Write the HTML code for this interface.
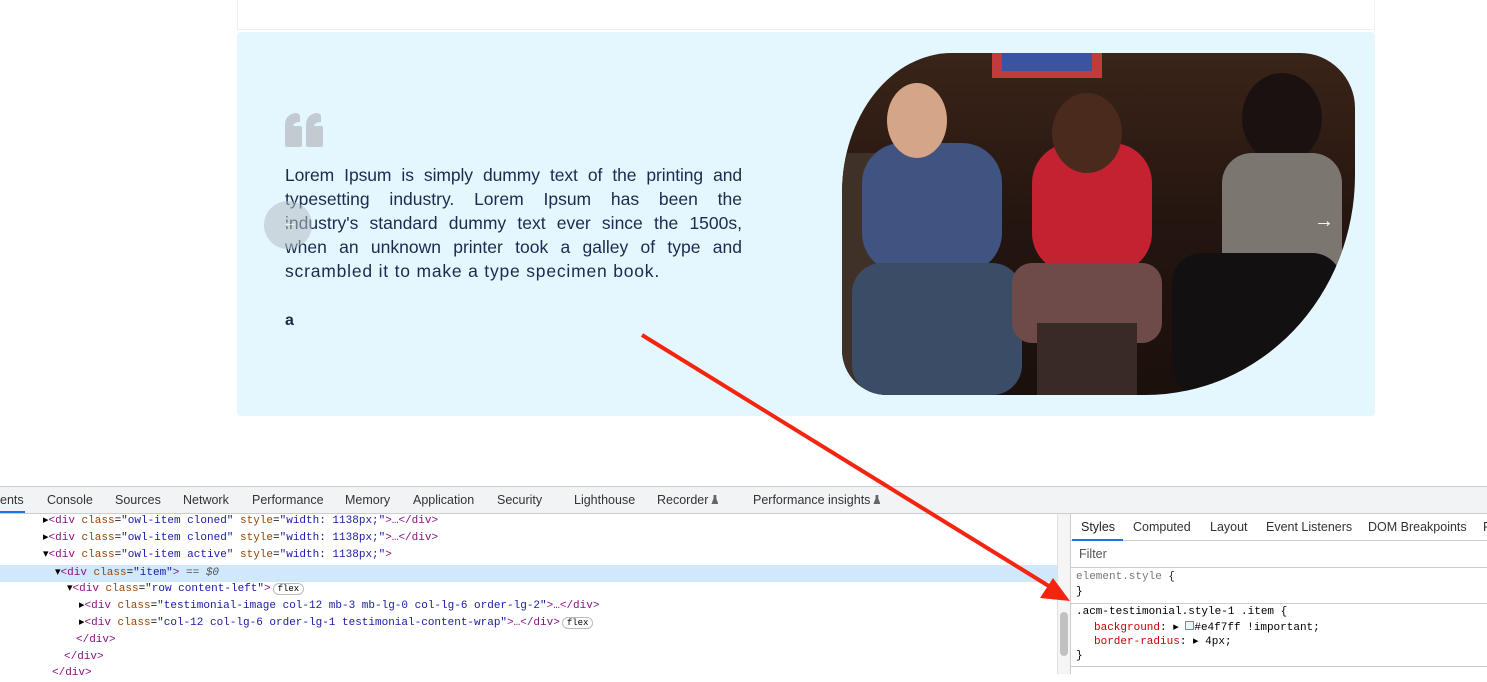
<!DOCTYPE html>
<html><head><style>
*{margin:0;padding:0;box-sizing:border-box}
body{width:1487px;height:674px;background:#fff;position:relative;overflow:hidden;font-family:"Liberation Sans",sans-serif}
.abs{position:absolute}
.mono{font-family:"Liberation Mono",monospace;font-size:11px;white-space:nowrap}
.tag{color:#881280}.an{color:#994500}.av{color:#1a1aa6}
.tab{position:absolute;top:493px;font-size:12.5px;color:#333}
.line{position:absolute;height:17px;line-height:17px}
.fl{display:inline-block;width:7px;height:9px;background:#666;clip-path:polygon(30% 0,70% 0,70% 40%,100% 100%,0 100%,30% 40%);margin-left:3px}
</style></head><body>
<div class="abs" style="left:237px;top:0;width:1138px;height:30px;border:1px solid #eee;border-top:none"></div>
<div class="abs" style="left:237px;top:32px;width:1138px;height:384px;background:#e4f7ff;border-radius:4px"></div>
<svg class="abs" style="left:285px;top:113px" width="38" height="34" viewBox="0 0 38 34"><path d="M0 12 Q0 2 10 0 Q15 0 15 4 L15 9 Q9 9 8 13 L15 13 Q17 13 17 15 L17 32 Q17 34 15 34 L2 34 Q0 34 0 32Z M21 12 Q21 2 31 0 Q36 0 36 4 L36 9 Q30 9 29 13 L36 13 Q38 13 38 15 L38 32 Q38 34 36 34 L23 34 Q21 34 21 32Z" fill="#c2cbd1"/></svg>
<div class="abs" style="left:285px;top:163px;width:457px;font-size:17.5px;line-height:24px;color:#1d2a4f">
<div style="text-align:justify;text-align-last:justify;letter-spacing:-0.1px">Lorem Ipsum is simply dummy text of the printing and</div>
<div style="text-align:justify;text-align-last:justify">typesetting industry. Lorem Ipsum has been the</div>
<div style="text-align:justify;text-align-last:justify">industry's standard dummy text ever since the 1500s,</div>
<div style="text-align:justify;text-align-last:justify">when an unknown printer took a galley of type and</div>
<div style="letter-spacing:0.8px">scrambled it to make a type specimen book.</div>
</div>
<div class="abs" style="left:285px;top:312px;font-size:16px;font-weight:bold;color:#1d2a4f">a</div>
<div class="abs" style="left:264px;top:201px;width:48px;height:48px;border-radius:50%;background:rgba(180,190,195,.55)"></div>
<div class="abs" style="left:282px;top:214px;color:#fff;font-size:16px">←</div>
<div class="abs" style="left:842px;top:53px;width:513px;height:342px;border-radius:110px 55px 210px 45px / 140px 55px 220px 45px;overflow:hidden;background:linear-gradient(180deg,#3a2418 0%,#241510 50%,#1a100c 100%)">
<div class="abs" style="left:150px;top:0;width:110px;height:25px;background:#c23a3a"></div>
<div class="abs" style="left:160px;top:0;width:90px;height:18px;background:#3954a0"></div>
<div class="abs" style="left:0;top:100px;width:130px;height:242px;background:#403128"></div>
<div class="abs" style="left:20px;top:90px;width:140px;height:130px;border-radius:40px;background:#3f5480"></div>
<div class="abs" style="left:45px;top:30px;width:60px;height:75px;border-radius:50%;background:#d4a586"></div>
<div class="abs" style="left:10px;top:210px;width:170px;height:132px;border-radius:30px;background:#3b4c66"></div>
<div class="abs" style="left:190px;top:90px;width:120px;height:130px;border-radius:40px;background:#c42230"></div>
<div class="abs" style="left:210px;top:40px;width:70px;height:80px;border-radius:50%;background:#4a2a1c"></div>
<div class="abs" style="left:170px;top:210px;width:150px;height:80px;border-radius:20px;background:#6e4a48"></div>
<div class="abs" style="left:195px;top:270px;width:100px;height:72px;background:#3a2a26"></div>
<div class="abs" style="left:400px;top:20px;width:80px;height:90px;border-radius:50%;background:#1a1210"></div>
<div class="abs" style="left:380px;top:100px;width:120px;height:140px;border-radius:30px;background:#7c7670"></div>
<div class="abs" style="left:330px;top:200px;width:170px;height:142px;border-radius:30px;background:#121010"></div>
</div>
<div class="abs" style="left:1314px;top:210px;color:#fff;font-size:20px;font-weight:bold">→</div>
<div class="abs" style="left:0;top:486px;width:1487px;height:188px;background:#fff;border-top:1px solid #cbcdd1"></div>
<div class="abs" style="left:0;top:487px;width:1487px;height:27px;background:#f1f3f4;border-bottom:1px solid #cbcdd1"></div>
<div class="tab" style="left:0">ents</div><div class="abs" style="left:0;top:511px;width:25px;height:2px;background:#1a73e8"></div>
<div class="tab" style="left:47px">Console</div><div class="tab" style="left:115px">Sources</div><div class="tab" style="left:183px">Network</div><div class="tab" style="left:252px">Performance</div><div class="tab" style="left:345px">Memory</div><div class="tab" style="left:413px">Application</div><div class="tab" style="left:497px">Security</div><div class="tab" style="left:574px">Lighthouse</div><div class="tab" style="left:657px">Recorder<span class="fl"></span></div><div class="tab" style="left:753px">Performance insights<span class="fl"></span></div>
<div class="abs" style="left:0;top:565px;width:1057px;height:17px;background:#cfe8fc"></div>
<div class="mono">
<div class="line" style="left:43px;top:513px">▸<span class="tag">&lt;div</span> <span class="an">class</span>=<span class="av">"owl-item cloned"</span> <span class="an">style</span>=<span class="av">"width: 1138px;"</span><span class="tag">&gt;…&lt;/div&gt;</span></div>
<div class="line" style="left:43px;top:530px">▸<span class="tag">&lt;div</span> <span class="an">class</span>=<span class="av">"owl-item cloned"</span> <span class="an">style</span>=<span class="av">"width: 1138px;"</span><span class="tag">&gt;…&lt;/div&gt;</span></div>
<div class="line" style="left:43px;top:547px">▾<span class="tag">&lt;div</span> <span class="an">class</span>=<span class="av">"owl-item active"</span> <span class="an">style</span>=<span class="av">"width: 1138px;"</span><span class="tag">&gt;</span></div>
<div class="line" style="left:55px;top:565px">▾<span class="tag">&lt;div</span> <span class="an">class</span>=<span class="av">"item"</span><span class="tag">&gt;</span> <span style="color:#555">== <i>$0</i></span></div>
<div class="line" style="left:67px;top:581px">▾<span class="tag">&lt;div</span> <span class="an">class</span>=<span class="av">"row content-left"</span><span class="tag">&gt;</span><span style="border:1px solid #bbb;border-radius:8px;padding:0 4px;font-size:9px;margin-left:2px">flex</span></div>
<div class="line" style="left:79px;top:598px">▸<span class="tag">&lt;div</span> <span class="an">class</span>=<span class="av">"testimonial-image col-12 mb-3 mb-lg-0 col-lg-6 order-lg-2"</span><span class="tag">&gt;…&lt;/div&gt;</span></div>
<div class="line" style="left:79px;top:615px">▸<span class="tag">&lt;div</span> <span class="an">class</span>=<span class="av">"col-12 col-lg-6 order-lg-1 testimonial-content-wrap"</span><span class="tag">&gt;…&lt;/div&gt;</span><span style="border:1px solid #bbb;border-radius:8px;padding:0 4px;font-size:9px;margin-left:2px">flex</span></div>
<div class="line tag" style="left:76px;top:632px">&lt;/div&gt;</div>
<div class="line tag" style="left:64px;top:649px">&lt;/div&gt;</div>
<div class="line tag" style="left:52px;top:665px">&lt;/div&gt;</div>
</div>
<div class="abs" style="left:1057px;top:514px;width:14px;height:160px;background:#f5f5f5;border-left:1px solid #e0e0e0;border-right:1px solid #cbcdd1"></div>
<div class="abs" style="left:1060px;top:612px;width:8px;height:44px;background:#c1c1c1;border-radius:4px"></div>
<div class="abs" style="left:1071px;top:514px;width:416px;height:27px;border-bottom:1px solid #cbcdd1"></div>
<div class="tab" style="left:1081px;top:520px;color:#222">Styles</div><div class="abs" style="left:1072px;top:539px;width:51px;height:2px;background:#1a73e8"></div>
<div class="tab" style="left:1133px;top:520px">Computed</div><div class="tab" style="left:1210px;top:520px">Layout</div><div class="tab" style="left:1266px;top:520px">Event Listeners</div><div class="tab" style="left:1368px;top:520px">DOM Breakpoints</div><div class="tab" style="left:1483px;top:520px">P</div>
<div class="tab" style="left:1079px;top:547px;color:#555">Filter</div>
<div class="abs" style="left:1071px;top:567px;width:416px;border-top:1px solid #cbcdd1"></div>
<div class="mono">
<div class="line" style="left:1076px;top:569px;color:#777">element.style <span style="color:#222">{</span></div>
<div class="line" style="left:1076px;top:584px">}</div>
<div class="abs" style="left:1071px;top:603px;width:416px;border-top:1px solid #cbcdd1"></div>
<div class="line" style="left:1076px;top:604px">.acm-testimonial.style-1 .item {</div>
<div class="line" style="left:1094px;top:620px"><span style="color:#c80000">background</span>: ▸ <span style="display:inline-block;width:9px;height:9px;border:1px solid #888;background:#e4f7ff"></span>#e4f7ff !important;</div>
<div class="line" style="left:1094px;top:634px"><span style="color:#c80000">border-radius</span>: ▸ 4px;</div>
<div class="line" style="left:1076px;top:648px">}</div>
<div class="abs" style="left:1071px;top:666px;width:416px;border-top:1px solid #cbcdd1"></div>
</div>
<svg class="abs" style="left:0;top:0" width="1487" height="674"><line x1="642" y1="335" x2="1052" y2="588" stroke="#f5240f" stroke-width="4"/><polygon points="1070,601 1040,598 1053,578" fill="#f5240f"/></svg>
</body></html>
